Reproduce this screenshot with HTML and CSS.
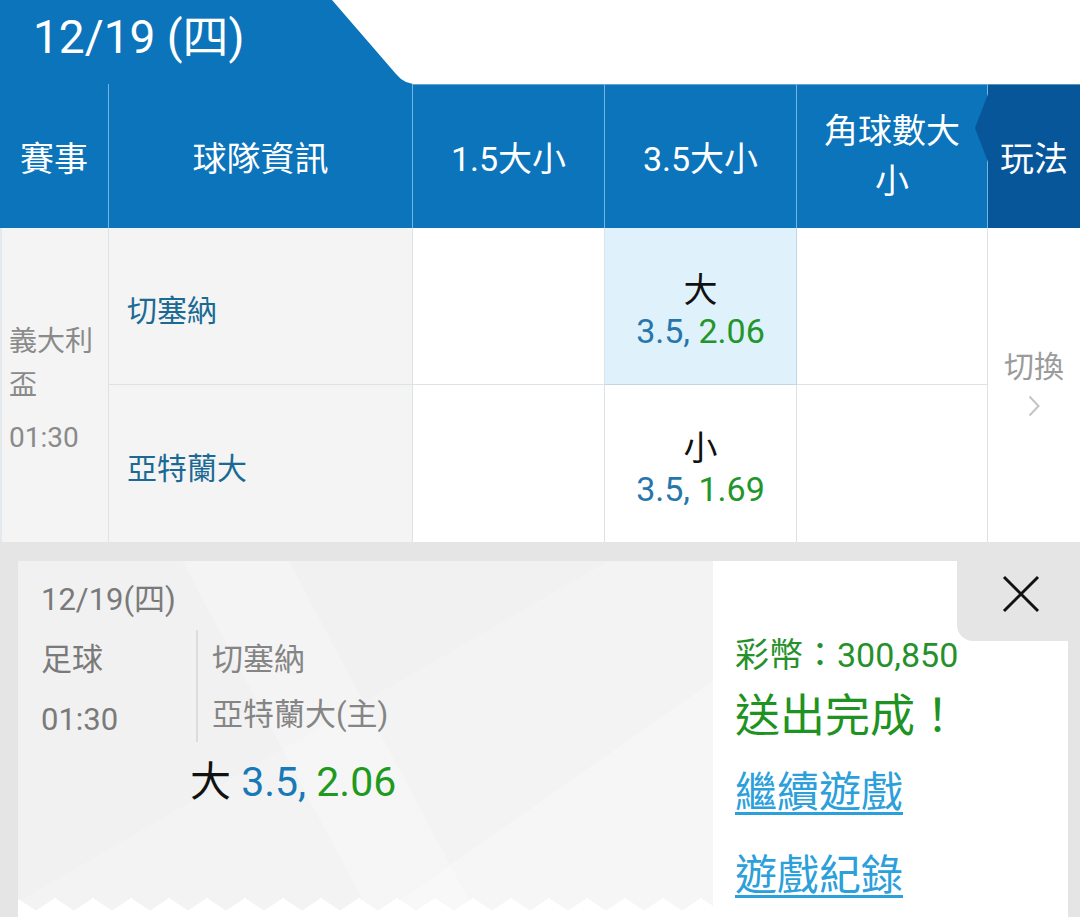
FILE: index.html
```html
<!DOCTYPE html>
<html lang="zh-Hant">
<head>
<meta charset="utf-8">
<title>投注</title>
<link rel="stylesheet" href="styles.css">
</head>
<body>
<div class="app">
  <div class="datebar">
    <div class="datetab">12/19 (四)</div>
  </div>

  <div class="grid">
    <div class="hd">賽事</div>
    <div class="hd">球隊資訊</div>
    <div class="hd hd-top">1.5大小</div>
    <div class="hd hd-top">3.5大小</div>
    <div class="hd hd-top hd-wrap">角球數大<br>小</div>
    <div class="hd hd-top hd-play">玩法</div>

    <div class="league">
      <div class="league-name">義大利盃</div>
      <div class="league-time">01:30</div>
    </div>
    <div class="team row1">切塞納</div>
    <div class="cell row1"></div>
    <div class="cell odds row1 sel">
      <div class="side">大</div>
      <div class="nums"><span class="line">3.5,</span> <span class="price">2.06</span></div>
    </div>
    <div class="cell row1"></div>
    <div class="play">
      <div class="play-label">切換</div>
      <svg class="chev" width="12" height="22" viewBox="0 0 12 22"><path d="M1.5 1.5 L10.5 11 L1.5 20.5" fill="none" stroke="#c4c4c4" stroke-width="2"/></svg>
    </div>

    <div class="team">亞特蘭大</div>
    <div class="cell"></div>
    <div class="cell odds">
      <div class="side">小</div>
      <div class="nums"><span class="line">3.5,</span> <span class="price">1.69</span></div>
    </div>
    <div class="cell"></div>
  </div>

  <div class="popup">
    <div class="ticket">
      <div class="t-date">12/19(四)</div>
      <div class="t-body">
        <div class="t-left">
          <div>足球</div>
          <div>01:30</div>
        </div>
        <div class="t-right">
          <div>切塞納</div>
          <div>亞特蘭大(主)</div>
        </div>
      </div>
      <div class="t-pick">大 <span class="line">3.5,</span> <span class="price">2.06</span></div>
    </div>
    <div class="panel">
      <div class="close">
        <svg width="38" height="38" viewBox="0 0 38 38"><path d="M2 2 L36 36 M36 2 L2 36" stroke="#111" stroke-width="3" fill="none"/></svg>
      </div>
      <div class="coins">彩幣：300,850</div>
      <div class="done">送出完成！</div>
      <a class="link link-first" href="#">繼續遊戲</a>
      <a class="link link-second" href="#">遊戲紀錄</a>
    </div>
  </div>
</div>
</body>
</html>
```

FILE: styles.css
```css
* {
  box-sizing: border-box;
  margin: 0;
  padding: 0;
}

html, body {
  width: 1080px;
  height: 917px;
  overflow: hidden;
  background: #fff;
}

body {
  font-family: Roboto, "Noto Sans CJK TC", sans-serif;
}

.app {
  width: 1080px;
}

/* date tab */
.datebar {
  height: 84px;
  display: flex;
}

.datetab {
  width: 413px;
  height: 84px;
  background: #0b74bb;
  color: #fff;
  font-size: 46px;
  line-height: 74px;
  padding-left: 33px;
  clip-path: polygon(0 0, 332px 0, 396px 74px, 401px 79px, 406px 82px, 413px 84px, 0 84px);
}

/* table */
.grid {
  display: grid;
  grid-template-columns: 109px 304px 192px 192px 191px 92px;
  grid-template-rows: 144px 157px 157px;
}

.hd {
  background: #0b74bb;
  color: #fff;
  font-size: 34px;
  display: flex;
  align-items: center;
  justify-content: center;
  text-align: center;
  border-right: 1px solid #74b4e0;
}

.hd-top {
  box-shadow: inset 0 1px 0 rgba(255, 255, 255, 0.35);
}

.hd-wrap {
  line-height: 50px;
}

.hd-play {
  background: #07569a;
  border-right: none;
  position: relative;
}

.hd-play::before {
  content: "";
  position: absolute;
  left: -13px;
  top: 10px;
  border-style: solid;
  border-width: 34px 13px 34px 0;
  border-color: transparent #07569a transparent transparent;
}

.league {
  grid-row: span 2;
  background: #f4f4f4;
  border-right: 1px solid #dde2e6;
  box-shadow: inset 2px 0 0 #e4e9ed;
  color: #8a8a8a;
  font-size: 28px;
  line-height: 44px;
  padding: 10px 8px 0 9px;
  display: flex;
  flex-direction: column;
  justify-content: center;
}

.league-time {
  margin-top: 8px;
}

.team {
  background: #f4f4f4;
  border-right: 1px solid #dde2e6;
  color: #1b6a94;
  font-size: 30px;
  display: flex;
  align-items: center;
  padding: 4px 0 0 18px;
}

.cell {
  border-right: 1px solid #dde2e6;
}

.row1 {
  border-bottom: 1px solid #dde2e6;
}

.odds {
  display: flex;
  flex-direction: column;
  align-items: center;
  justify-content: center;
  font-size: 34px;
  line-height: 41px;
  padding-top: 10px;
  color: #111;
}

.odds.sel {
  background: #dff1fb;
  border-right-color: #c3d6e4;
  border-bottom-color: #c3d6e4;
}

.line {
  color: #2776ab;
}

.price {
  color: #23962b;
}

.play {
  grid-row: span 2;
  display: flex;
  flex-direction: column;
  align-items: center;
  justify-content: center;
  color: #9b9b9b;
  font-size: 30px;
  line-height: 40px;
  padding-bottom: 6px;
}

.chev {
  margin-top: 8px;
}

/* popup */
.popup {
  height: 375px;
  background: #e5e5e5;
  display: flex;
  padding: 19px 12px 0 18px;
}

.ticket {
  width: 695px;
  position: relative;
  padding: 19px 0 0 23px;
  background-color: #f3f3f3;
  background-image:
    linear-gradient(62deg, transparent 0 40%, rgba(255, 255, 255, 0.22) 40% 52%, transparent 52%),
    linear-gradient(-35deg, rgba(255, 255, 255, 0.25) 0 28%, transparent 28%),
    linear-gradient(150deg, rgba(0, 0, 0, 0.008) 0 45%, transparent 45%);
}

.ticket::after {
  content: "";
  position: absolute;
  left: 0;
  right: 0;
  bottom: 0;
  height: 19px;
  background:
    conic-gradient(from 124deg at 50% 0, #fff 112deg, transparent 0) 18px 0 / 38px 13px repeat-x,
    linear-gradient(#fff, #fff) 0 13px / 100% 6px no-repeat;
}

.t-date {
  font-size: 31px;
  line-height: 40px;
  color: #7a7a7a;
}

.t-body {
  display: flex;
  align-items: flex-start;
  margin-top: 10px;
}

.t-left {
  width: 155px;
  font-size: 31px;
  line-height: 60px;
  color: #7a7a7a;
}

.t-right {
  border-left: 2px solid #dcdcdc;
  padding: 2px 0 0 14px;
  font-size: 31px;
  line-height: 55px;
  color: #858585;
}

.t-pick {
  margin: 7px 0 0 149px;
  font-size: 41px;
  line-height: 50px;
  color: #111;
}

.t-pick .line {
  color: #1779b8;
}

.t-pick .price {
  color: #1f9a20;
}

.panel {
  flex: 1;
  position: relative;
  background: #fff;
  padding: 72px 0 0 22px;
}

.close {
  position: absolute;
  top: 0;
  right: -12px;
  width: 123px;
  height: 80px;
  background: #e5e5e5;
  border-bottom-left-radius: 16px;
  display: flex;
  justify-content: center;
  align-items: flex-start;
  padding: 14px 0 0 5px;
}

.coins {
  font-size: 34px;
  line-height: 44px;
  color: #26912b;
}

.done {
  font-size: 45px;
  line-height: 56px;
  margin-top: 12px;
  color: #1e9322;
}

.link {
  display: block;
  width: max-content;
  font-size: 42px;
  line-height: 56px;
  color: #2ba0da;
  text-decoration: underline;
  text-decoration-thickness: 3px;
  text-underline-offset: 5px;
}

.link-first {
  margin-top: 20px;
}

.link-second {
  margin-top: 27px;
}
```
